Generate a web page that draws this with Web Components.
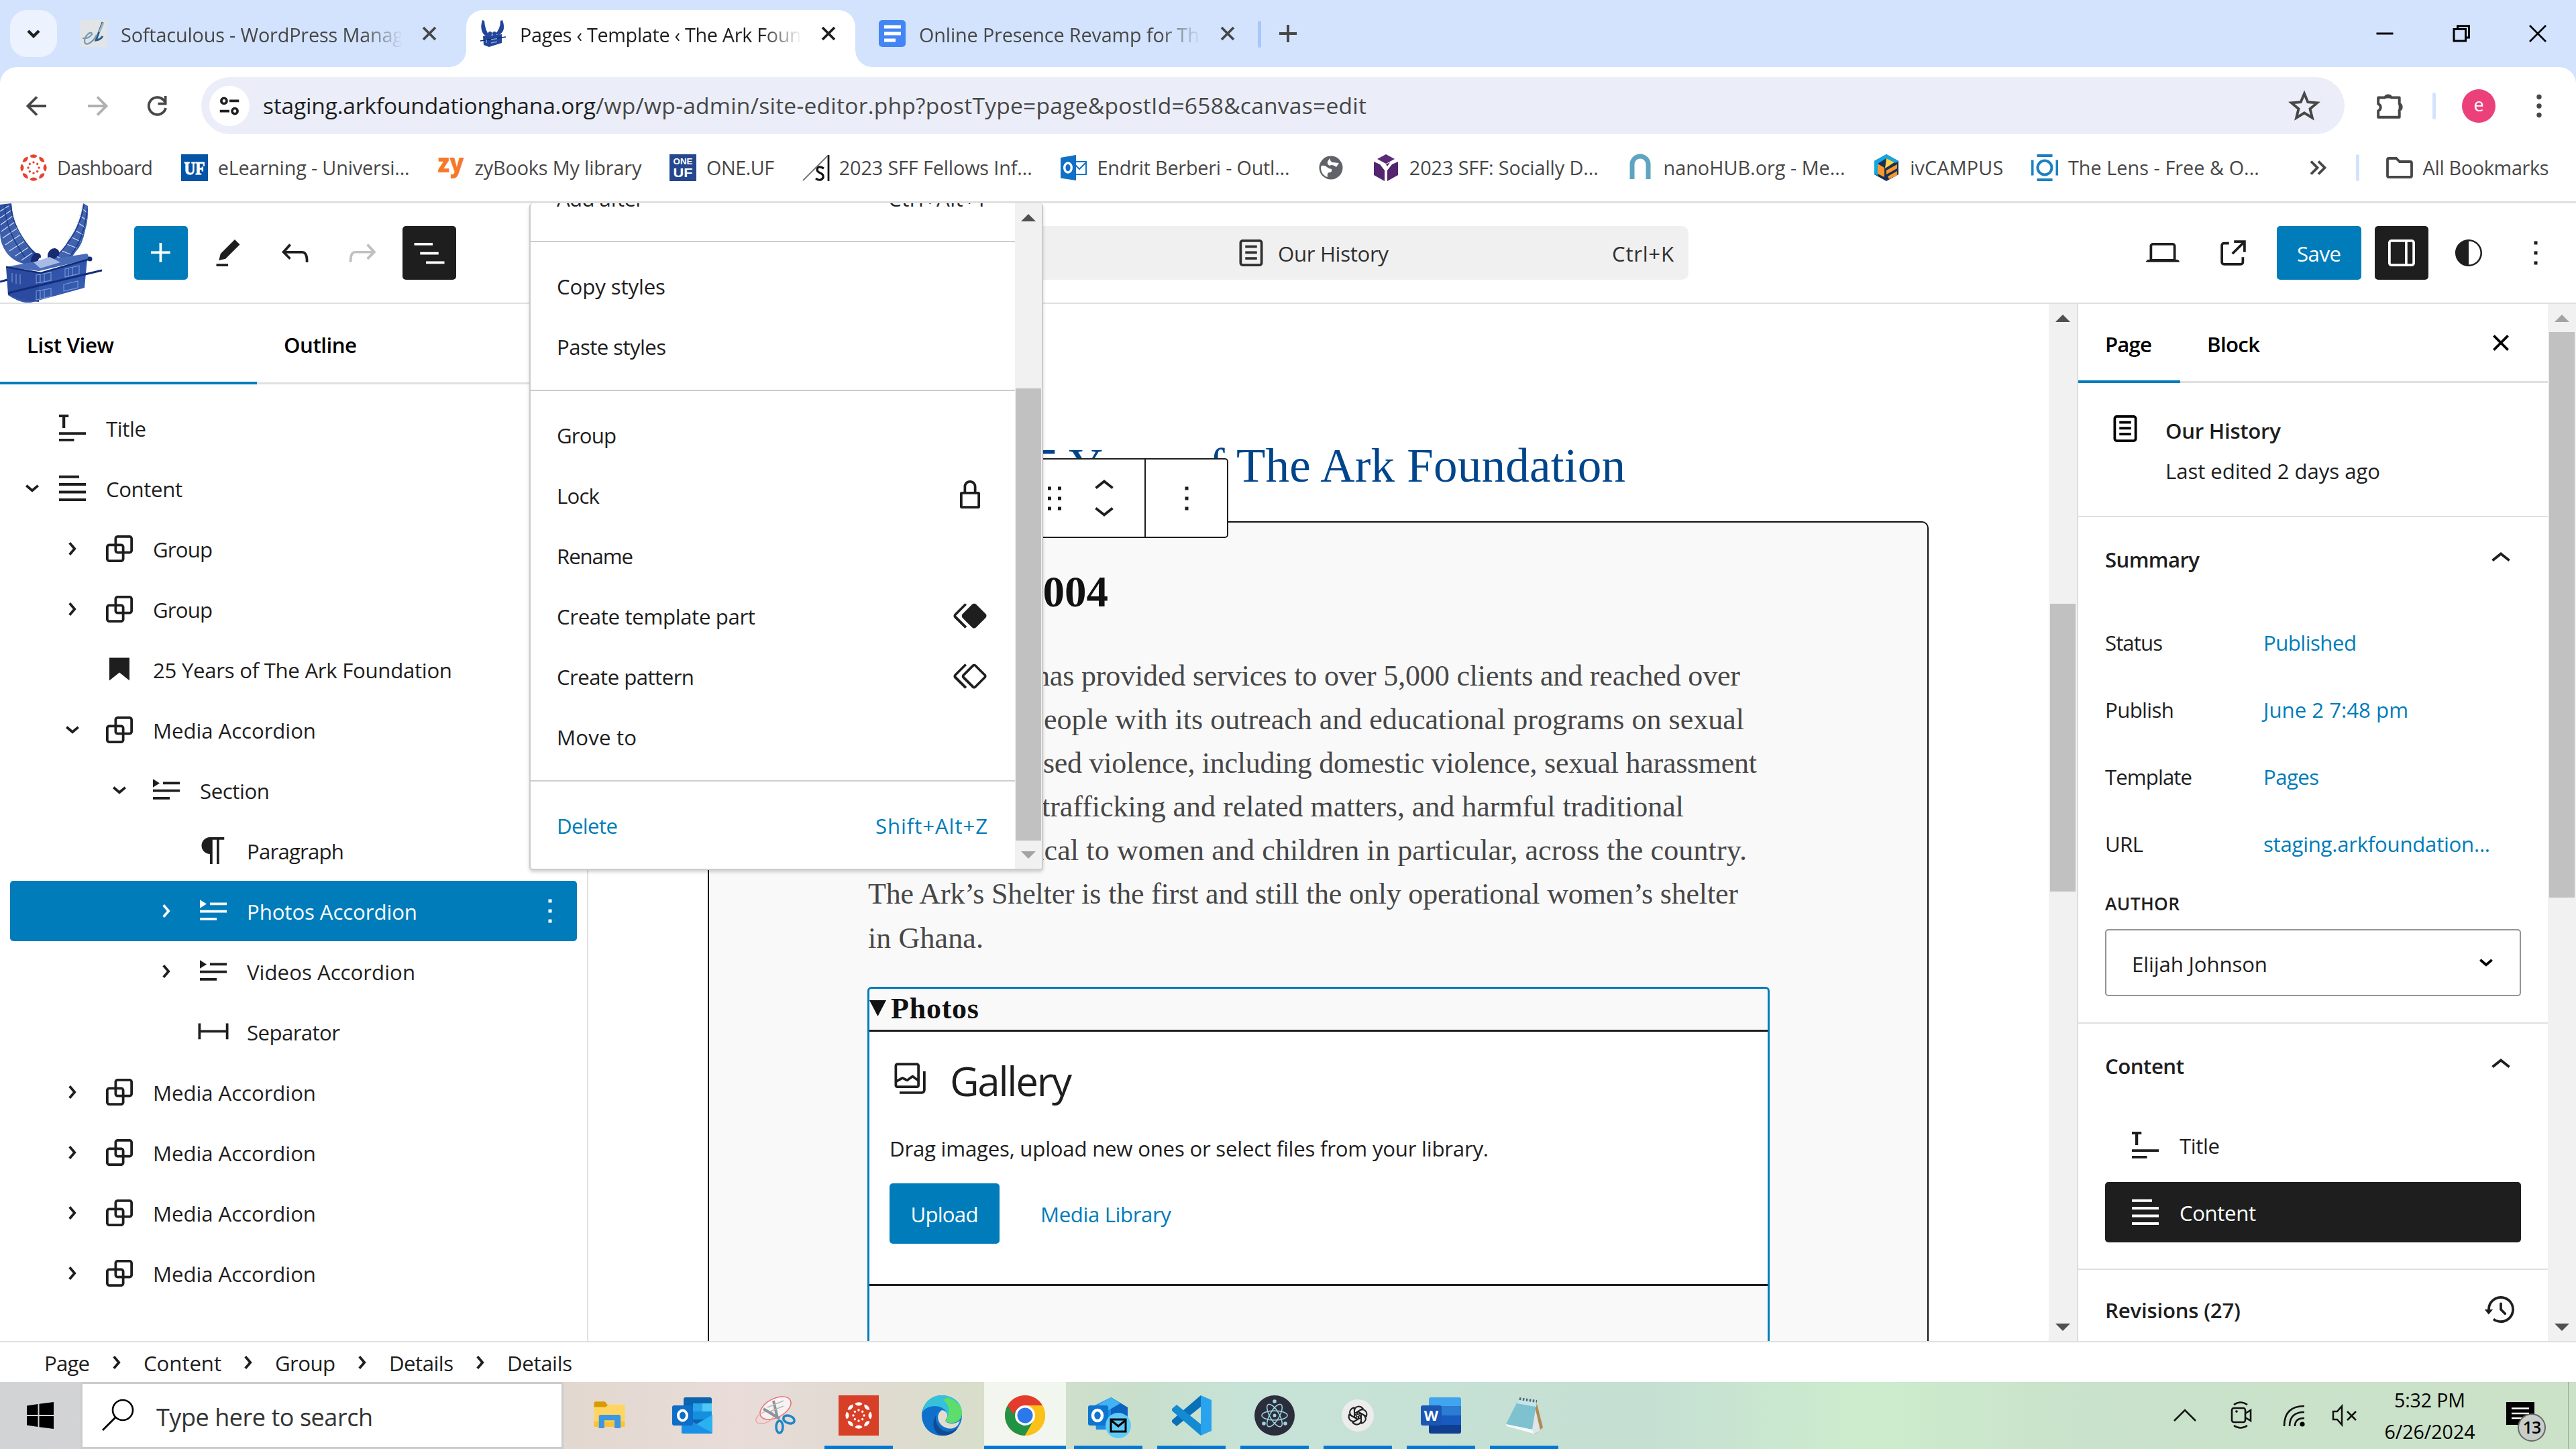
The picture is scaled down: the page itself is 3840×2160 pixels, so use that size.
<!DOCTYPE html>
<html lang="en">
<head>
<meta charset="utf-8">
<title>Pages ‹ Template ‹ The Ark Foundation</title>
<style>
html,body{margin:0;padding:0;width:3840px;height:2160px;overflow:hidden;background:#fff}
body{font-family:"Open Sans","Noto Sans",sans-serif;color:#1e1e1e}
</style>
</head>
<body>
<ark-desktop></ark-desktop>
<script>
/* ---------- icon library ---------- */
const P = d => `<path fill-rule="evenodd" d="${d}"/>`;
const canvasLogo = (bg, fg) => {
  let s = bg;
  for (let i = 0; i < 8; i++) s += `<g transform="rotate(${i*45} 20 20)"><path d="M14.5 2.2a6 5.4 0 0 0 11 0Q20-1.5 14.5 2.2z" fill="${fg}"/><circle cx="20" cy="12" r="1.7" fill="${fg}"/></g>`;
  return s;
};
const ICONS = {
  plus: P('M11 12.5V17.5H12.5V12.5H17.5V11H12.5V6H11V11H6V12.5H11Z'),
  edit: P('m19 7-3-3-8.5 8.5-1 4 4-1L19 7Zm-7 11.5H5V20h7v-1.5Z'),
  undo: P('M18.3 11.7c-.6-.6-1.4-.9-2.3-.9H6.7l2.9-3.3-1.1-1-4.5 5L8.5 16l1-1-2.7-2.7H16c.5 0 .9.2 1.3.5 1 1 1 3.4 1 4.5v.3h1.5v-.2c0-1.5 0-4.3-1.5-5.7z'),
  redo: P('M15.6 6.5l-1.1 1 2.9 3.3H8c-.9 0-1.7.3-2.3.9-1.4 1.5-1.4 4.2-1.4 5.6v.2h1.5v-.3c0-1.1 0-3.5 1-4.5.3-.3.7-.5 1.3-.5h9.2L14.5 15l1.1 1.1 4.6-4.6-4.6-5z'),
  listview: P('M3 6h11v1.5H3V6Zm3.5 5.5h11V13h-11v-1.5ZM21 17H10v1.5h11V17Z'),
  page: P('M15.5 7.5h-7V9h7V7.5Zm-7 3.5h7v1.5h-7V11Zm7 3.5h-7V16h7v-1.5Z') + P('M17 4H7a2 2 0 0 0-2 2v12a2 2 0 0 0 2 2h10a2 2 0 0 0 2-2V6a2 2 0 0 0-2-2ZM7 5.5h10a.5.5 0 0 1 .5.5v12a.5.5 0 0 1-.5.5H7a.5.5 0 0 1-.5-.5V6a.5.5 0 0 1 .5-.5Z'),
  desktop: P('M20.5 16h-.7V8c0-1.1-.9-2-2-2H6.2c-1.1 0-2 .9-2 2v8h-.7c-.8 0-1.5.7-1.5 1.5h20c0-.8-.7-1.5-1.5-1.5zM5.7 8c0-.3.2-.5.5-.5h11.6c.3 0 .5.2.5.5v7.6H5.7V8z'),
  external: P('M19.5 4.5h-7V6h4.44l-5.97 5.97 1.06 1.06L18 7.06v4.44h1.5v-7Zm-13 1a2 2 0 0 0-2 2v10a2 2 0 0 0 2 2h10a2 2 0 0 0 2-2v-3H17v3a.5.5 0 0 1-.5.5h-10a.5.5 0 0 1-.5-.5v-10a.5.5 0 0 1 .5-.5h3V5.5h-3Z'),
  drawer: P('M18 4H6c-1.1 0-2 .9-2 2v12c0 1.1.9 2 2 2h12c1.1 0 2-.9 2-2V6c0-1.1-.9-2-2-2zm-4 14.5H6c-.3 0-.5-.2-.5-.5V6c0-.3.2-.5.5-.5h8v13zm4.5-.5c0 .3-.2.5-.5.5h-2.5v-13H18c.3 0 .5.2.5.5v12z'),
  styles: P('M12 4c-4.4 0-8 3.6-8 8v.1c0 4.1 3.2 7.5 7.2 7.9h.8c4.4 0 8-3.6 8-8s-3.6-8-8-8zm0 15V5c3.9 0 7 3.1 7 7s-3.1 7-7 7z'),
  more: P('M13 19h-2v-2h2v2zm0-6h-2v-2h2v2zm0-6h-2V5h2v2z'),
  close: P('M12 13.06l3.712 3.713 1.061-1.06L13.061 12l3.712-3.712-1.06-1.06L12 10.938 8.288 7.227l-1.061 1.06L10.939 12l-3.712 3.712 1.06 1.061L12 13.061z'),
  up: P('M6.5 12.4L12 8l5.5 4.4-.9 1.2L12 10l-4.5 3.6-1-1.2z'),
  down: P('M17.5 11.6L12 16l-5.5-4.4.9-1.2L12 14l4.5-3.6 1 1.2z'),
  rsmall: P('M10.8622 8.04053L14.2805 12.0286L10.8622 16.0167L9.72327 15.0405L12.3049 12.0286L9.72327 9.01672L10.8622 8.04053Z'),
  dsmall: P('m15.99 10.889-3.988 3.418-3.988-3.418.976-1.14 3.012 2.582 3.012-2.581.976 1.139Z'),
  title: P('M4 4h5.7v1.6H7.7V12H6V5.6H4zM4 14.5h16V16H4zM4 18.4h9v1.5H4z'),
  content: P('M4 4.3h12v1.6H4zM4 8.8h16v1.6H4zM4 13.4h16v1.6H4zM4 18h16v1.6H4z'),
  group: P('M18 4h-7c-1.1 0-2 .9-2 2v3H6c-1.1 0-2 .9-2 2v7c0 1.1.9 2 2 2h7c1.1 0 2-.9 2-2v-3h3c1.1 0 2-.9 2-2V6c0-1.1-.9-2-2-2zm-4.5 14c0 .3-.2.5-.5.5H6c-.3 0-.5-.2-.5-.5v-7c0-.3.2-.5.5-.5h3V13c0 1.1.9 2 2 2h2.5v3zm0-4.5H11c-.3 0-.5-.2-.5-.5v-2.5H13c.3 0 .5.2.5.5v2.5zm5-.5c0 .3-.2.5-.5.5h-3V11c0-1.1-.9-2-2-2h-2.5V6c0-.3.2-.5.5-.5h7c.3 0 .5.2.5.5v7z'),
  heading: P('M6 5V18.5911L12 13.8473L18 18.5911V5H6Z'),
  details: P('M4 16h10v1.5H4V16Zm0-4.5h16V13H4v-1.5ZM10 7h10v1.5H10V7Z') + P('m4 5.25 4 2.5-4 2.5v-5Z'),
  paragraph: P('m9.99609 14v-.2251l.00391.0001v6.225h1.5v-14.5h2.5v14.5h1.5v-14.5h3v-1.5h-8.50391c-2.76142 0-5 2.23858-5 5 0 2.7614 2.23858 5 5 5z'),
  separator: P('M4.5 12.5v4H3V7h1.5v3.987h15V7H21v9.5h-1.5v-4h-15Z'),
  lock: P('M17 10h-1.2V7c0-2.1-1.7-3.8-3.8-3.8-2.1 0-3.8 1.7-3.8 3.8v3H7c-.6 0-1 .4-1 1v8c0 .6.4 1 1 1h10c.6 0 1-.4 1-1v-8c0-.6-.4-1-1-1zM9.7 7c0-1.3 1-2.3 2.3-2.3s2.3 1 2.3 2.3v3H9.7V7zm6.8 11.5h-9v-7h9v7z'),
  symbolfill: P('M21.3 10.8l-5.6-5.6c-.7-.7-1.8-.7-2.5 0l-5.6 5.6c-.7.7-.7 1.8 0 2.5l5.6 5.6c.3.3.8.5 1.2.5s.9-.2 1.2-.5l5.6-5.6c.8-.7.8-1.9.1-2.5zm-17.6 1L10 5.5l-1-1-6.3 6.3c-.7.7-.7 1.8 0 2.5L9 19.5l1.1-1.1-6.3-6.3c-.2 0-.2-.2-.1-.3z'),
  symbol: P('M21.3 10.8l-5.6-5.6c-.7-.7-1.8-.7-2.5 0l-5.6 5.6c-.7.7-.7 1.8 0 2.5l5.6 5.6c.3.3.8.5 1.2.5s.9-.2 1.2-.5l5.6-5.6c.8-.7.8-1.9.1-2.5zm-1 1.4l-5.6 5.6c-.1.1-.3.1-.4 0l-5.6-5.6c-.1-.1-.1-.3 0-.4l5.6-5.6s.1-.1.2-.1.1 0 .2.1l5.6 5.6c.1.1.1.3 0 .4zm-16.6-.4L10 5.5l-1-1-6.3 6.3c-.7.7-.7 1.8 0 2.5L9 19.5l1.1-1.1-6.3-6.3c-.2 0-.2-.2-.1-.3z'),
  drag: P('M8 7h2V5H8v2zm0 6h2v-2H8v2zm0 6h2v-2H8v2zm6-14v2h2V5h-2zm0 8h2v-2h-2v2zm0 6h2v-2h-2v2z'),
  gallery: P('M16.375 4.5H4.625a.125.125 0 0 0-.125.125v8.254l2.859-1.54a.75.75 0 0 1 .68-.016l2.384 1.142 2.89-2.074a.75.75 0 0 1 .874 0l2.313 1.66V4.625a.125.125 0 0 0-.125-.125Zm.125 9.398-2.75-1.975-2.813 2.02a.75.75 0 0 1-.76.067l-2.444-1.17L4.5 14.583v1.792c0 .069.056.125.125.125h11.75a.125.125 0 0 0 .125-.125v-2.477ZM4.625 3C3.728 3 3 3.728 3 4.625v11.75C3 17.273 3.728 18 4.625 18h11.75c.898 0 1.625-.727 1.625-1.625V4.625C18 3.728 17.273 3 16.375 3H4.625ZM20 8v11c0 .69-.31 1-.999 1H6v1.5h13.001c1.52 0 2.499-.982 2.499-2.5V8H20Z'),
  backup: P('M5.5 12h1.75l-2.5 3-2.5-3H4a8 8 0 113.134 6.35l.907-1.194A6.5 6.5 0 105.5 12zm9.53 1.97l-2.28-2.28V8.5a.75.75 0 00-1.5 0V12a.747.747 0 00.218.529l1.282-.84-1.28.842 2.5 2.5a.75.75 0 101.06-1.061z'),
};
/* icons on a 40-unit grid: browser chrome and favicons */
const ICONS40 = {
  tabchev: '<path d="M12 16l8 8 8-8" fill="none" stroke="currentColor" stroke-width="4.4"/>',
  x: '<path d="M11 11l18 18M29 11L11 29" stroke="currentColor" stroke-width="3.8"/>',
  add: '<path d="M20 7v26M7 20h26" stroke="currentColor" stroke-width="4"/>',
  min: '<path d="M7.500 20h25" stroke="currentColor" stroke-width="3"/>',
  restore: '<path d="M9 13.500h17.500V31H9zM14.500 13V8.700h17V26H27" fill="none" stroke="currentColor" stroke-width="3"/>',
  winx: '<path d="M8 8l24 24M32 8L8 32" stroke="currentColor" stroke-width="2.6"/>',
  back: '<path d="M34 20H7M20 6.500L6.500 20 20 33.500" fill="none" stroke="currentColor" stroke-width="3.8"/>',
  fwd: '<path d="M6 20h27M20 6.500L33.500 20 20 33.500" fill="none" stroke="currentColor" stroke-width="3.8"/>',
  reload: '<path d="M32 23a12.800 12.800 0 1 1-3.500-12.200l3 3.400" fill="none" stroke="currentColor" stroke-width="3.8"/><path d="M33.500 5v13.500H20.500v-3.700h9.300V5z" fill="currentColor"/>',
  tune: '<g fill="none" stroke="currentColor" stroke-width="3.8"><circle cx="11.500" cy="12" r="4.300"/><path d="M20 12h15M5 28h15"/><circle cx="28.500" cy="28" r="4.300"/></g>',
  star: '<path d="M20 4l4.600 11 12 1-9.200 7.700 2.900 11.600L20 29l-10.300 6.300 2.900-11.600L3.400 16l12-1z" fill="none" stroke="currentColor" stroke-width="3.4"/>',
  ext: '<path d="M4 10h9.500a5 5 0 0 1 9 0H34v9a5 5 0 0 1 0 9v10H4V29a5.400 5.400 0 0 0 0-10z" transform="translate(0 -2)" fill="none" stroke="currentColor" stroke-width="3.800" stroke-linejoin="round"/><path d="M13 9a5 5 0 0 1 10 0zM33 17a5 5 0 0 1 0 10z" fill="currentColor"/>',
  dots: '<g fill="currentColor"><circle cx="20" cy="6.500" r="3.700"/><circle cx="20" cy="20" r="3.700"/><circle cx="20" cy="33.500" r="3.700"/></g>',
  raquo: '<path d="M9 10.500l9.500 9.500L9 29.500M20 10.500l9.500 9.500L20 29.500" fill="none" stroke="currentColor" stroke-width="3.8"/>',
  folder: '<path d="M2 8a2 2 0 0 1 2-2h11l5 5h16a2 2 0 0 1 2 2v19a2 2 0 0 1-2 2H4a2 2 0 0 1-2-2z" fill="none" stroke="currentColor" stroke-width="3.800"/>',
  soft: '<rect width="40" height="40" fill="#e3e4e6"/><path d="M33 3L23 30q7-1 10-6" fill="none" stroke="#2c5d85" stroke-width="3"/><path d="M3 27q10 1 14-6 0-4-5-1-6 5-6 12 1 5 6 3 8-4 12-13" fill="none" stroke="#7397b3" stroke-width="2.200"/><path d="M28 18L34 4" stroke="#9ab6cc" stroke-width="3"/>',
  ark: '<g fill="#22459a"><path d="M4 0Q-1 16 9 24l6-1Q8 16 7 1zM34 0Q40 16 29 22l-6-1q8-8 8-20z"/><circle cx="15.500" cy="20" r="3"/><circle cx="22" cy="20" r="3"/><path d="M5 24l28-3v13L14 40 6 37z"/></g><path d="M1 31l38-6" stroke="#102a6b" stroke-width="1.500"/><path d="M10 29v5M17 29l9-1.500M17 34l9-1.800" stroke="#8aa2dc" stroke-width="1.500"/>',
  docs: '<rect width="40" height="40" rx="5" fill="#4285f4"/><path d="M8 10h25M8 20h25M8 30h17" stroke="#fff" stroke-width="5"/>',
  canvas: canvasLogo('', '#e4432f'),
  uf: '<rect width="40" height="40" fill="#0553a5"/><text x="20" y="30" text-anchor="middle" font-family="Liberation Serif" font-weight="700" font-size="27" textLength="31" lengthAdjust="spacingAndGlyphs" fill="#fff" stroke="#fff" stroke-width="1">UF</text>',
  zy: '<text x="20" y="27" text-anchor="middle" font-family="Open Sans" font-weight="800" font-size="38" textLength="39" lengthAdjust="spacingAndGlyphs" fill="#f6792a">zy</text>',
  oneuf: '<rect width="40" height="40" fill="#26478d"/><text x="20" y="14.500" text-anchor="middle" font-family="Liberation Sans" font-weight="700" font-size="12.500" textLength="29" lengthAdjust="spacingAndGlyphs" fill="#fff">ONE</text><text x="20" y="34" text-anchor="middle" font-family="Liberation Sans" font-weight="700" font-size="18.500" textLength="29" lengthAdjust="spacingAndGlyphs" fill="#fff">UF</text>',
  sff: '<path d="M39 1v39" stroke="#111" stroke-width="2.800"/><path d="M38 2L1 39" stroke="#777" stroke-width="2"/><path d="M32 21q-9-5-10 2 0 3 5 5t4 7q-4 6-11 1" fill="none" stroke="#111" stroke-width="3.200"/>',
  outlook: '<path d="M20 11h19v19H20z" fill="#fff" stroke="#0f74c8" stroke-width="2"/><path d="M21 14l8 8 9-9" fill="none" stroke="#0f74c8" stroke-width="2"/><path d="M1 5L24 1v38L1 35.500z" fill="#0f70c5"/><ellipse cx="12" cy="20" rx="5.300" ry="7" fill="none" stroke="#fff" stroke-width="3.400"/>',
  globe: '<circle cx="20" cy="20" r="17.500" fill="#5f6368"/><path d="M6 17q5-1 8 2t7 3q1 5-3 5t-3 7Q5 31 5 19zM18 6q2 7 6 6l8 1-4 6q-6-5-10-2-4-2-3-6z" fill="#fff"/><path d="M20 8q6-2 11 4-5 1-8-1z" fill="#5f6368"/>',
  purple: '<path d="M20 0l13 7-13 7L7 7z" fill="#5b2a79"/><path d="M2 11l9 4 7 9v16L2 31zM38 11l-9 4-7 9v16l16-9z" fill="#54246f"/><path d="M20 15l6-3-4 6z" fill="#54246f"/>',
  nano: '<path d="M8 37V15a12 12 0 0 1 24 0v22" fill="none" stroke="#5da5c1" stroke-width="7"/>',
  iv: '<path d="M20 0l18 10v20L20 40 2 30V10z" fill="#1a2f55"/><path d="M20 0l18 10-4 3-14-7-13 8v18l-5-3V10z" fill="#12a7e4"/><path d="M20 6l12 6-14 9z" fill="#ffd24a"/><path d="M7 14l10 6v14l-10-5zM20 24l16-9v6l-16 9zM22 33l14-8v6l-12 6z" fill="#f9992b"/>',
  lens: '<g fill="#1b7fc2"><rect x="8.500" y="0" width="23" height="4"/><rect x="8.500" y="36" width="23" height="4"/><rect x="0" y="8.500" width="3.500" height="23"/><rect x="36.500" y="8.500" width="3.500" height="23"/></g><circle cx="20" cy="20" r="10.500" fill="none" stroke="#1b7fc2" stroke-width="4"/>',
};
/* 60-unit grid: taskbar */
const ICONS60 = {
  start: '<g fill="#000"><path d="M10 15.500L26.500 13v16H10zM28.500 12.700L50 10v19H28.500zM10 31h16.500v16L10 44.500zM28.500 31H50v19l-21.500-2.800z"/></g>',
  search: '<circle cx="35" cy="22" r="15" fill="none" stroke="#000" stroke-width="2.600"/><path d="M24.500 32.500L5 52" stroke="#000" stroke-width="2.800"/>',
  explorer: '<path d="M5 10a3 3 0 0 1 3-3h15l5 6-4 4H5z" fill="#d99a00"/><path d="M5 16h20l4-4h24a3 3 0 0 1 3 3v33H5z" fill="#ffd561"/><path d="M5 40h51v9H5z" fill="#fbc234"/><path d="M13 51V32a3 3 0 0 1 3-3h30a3 3 0 0 1 3 3v19H39V38H22v13z" fill="#3b97e3"/>',
  outlook: '<path d="M17 6a3 3 0 0 1 3-3h36a3 3 0 0 1 3 3v50H17z" fill="#0a64ae"/><path d="M17 12h21v12H17z" fill="#0364b8"/><path d="M38 12h21v12H38z" fill="#50c8f5"/><path d="M31 12h14v12H31z" fill="#2aa4ea"/><path d="M17 24h42v12H17z" fill="#1490df"/><path d="M14 56V30l46 26q0 1-3 1H17q-3 0-3-1z" fill="#1a8fe6"/><path d="M60 29v27L36 43z" fill="#2bb1f2"/><rect x="0" y="15" width="31" height="30" rx="3" fill="#0f6cc7"/><ellipse cx="15.500" cy="30" rx="6.500" ry="7.500" fill="none" stroke="#fff" stroke-width="4"/>',
  snip: '<ellipse cx="30" cy="19" rx="25" ry="14" transform="rotate(-28 30 19)" fill="#f7f3f3" stroke="#e8727a" stroke-width="1.600"/><ellipse cx="14" cy="33" rx="14" ry="8" transform="rotate(-25 14 33)" fill="none" stroke="#ef9ba0" stroke-width="1.200"/><path d="M27 8l6 26M12 20l24 15" stroke="#8c959b" stroke-width="4"/><path d="M18 18L42 8M22 24l20-8" stroke="#b9b9b9" stroke-width="1.500"/><ellipse cx="36" cy="47" rx="5" ry="9" fill="none" stroke="#1e86c8" stroke-width="3.500"/><ellipse cx="50" cy="36" rx="8.500" ry="5.500" transform="rotate(20 50 36)" fill="none" stroke="#1e86c8" stroke-width="3.500"/>',
  canvas: '<rect width="60" height="60" fill="#d83f27"/><g transform="translate(10 10)">' + canvasLogo('', '#fff') + '</g>',
  edge: '<circle cx="30" cy="30" r="30" fill="#1378cf"/><path d="M1 25C4 8 16 0 30 0c18 0 30 12 30 26 0 9-7 15-15 15-6 0-10-2-9-4 2-3 3-5 2-9-2-8-10-12-18-12C11 16 4 20 1 25z" fill="#35c1d9"/><path d="M38 3c13 4 22 12 22 23 0 9-7 15-15 15-6 0-10-2-9-4 7-12 6-22-4-30z" fill="#5ddd6b"/><path d="M1 25c7-10 22-11 30-3-9 0-12 8-9 15 4 11 16 16 32 11-5 8-14 12-24 12C12 60-1 46 1 25z" fill="#0f6fcb"/><path d="M22 29c-3 6 0 18 9 23 7 4 16 2 23-4-4 8-13 12-22 12C20 59 12 44 22 29z" fill="#114a92"/><path d="M30 22c6 1 9 5 8 10-2 5-5 6 1 9 6 2 12 1 18-3-4 12-14 14-24 9-10-6-12-19-3-25z" fill="#e2ddd0"/>',
  chrome: '<circle cx="30" cy="30" r="30" fill="#fbc116"/><path d="M4 15A30 30 0 0 0 30 60L43 37.500 30 30z" fill="#229244"/><path d="M4 15l13 22 13-22z" fill="#229244"/><path d="M30 15h26A30 30 0 0 1 30 60L43 37z" fill="#fbc116"/><path d="M4 15A30 30 0 0 1 56 15H30L17 22 12 28z" fill="#e33b2e"/><circle cx="30" cy="30" r="15" fill="#fff"/><circle cx="30" cy="30" r="11.500" fill="#2b78ea"/>',
  outlooknew: '<path d="M8 16L34 3l25 15v33H12z" fill="#1c8be0"/><path d="M34 3l25 15v12L34 42z" fill="#0b63bd"/><path d="M12 16L34 3l14 9-24 14z" fill="#41b3f2"/><rect x="0" y="15" width="30" height="30" rx="3" fill="#0f74cf"/><ellipse cx="14" cy="30" rx="7" ry="8" fill="none" stroke="#fff" stroke-width="4.500"/><circle cx="45" cy="45" r="19" fill="#5fcaf8"/><rect x="34" y="36" width="22" height="18" fill="#5fcaf8" stroke="#000" stroke-width="3"/><path d="M34 37l11 9 11-9" fill="none" stroke="#000" stroke-width="3"/>',
  vscode: '<path d="M44 0L60 7v46L44 60z" fill="#2aa3ee"/><path d="M44 0v17L8 46l-7-6v-3z" fill="#0a70b8"/><path d="M44 60V43L8 14l-7 6v3z" fill="#128bd3"/>',
  electron: '<circle cx="30" cy="30" r="30" fill="#2b2e3a"/><g fill="none" stroke="#9fd3df" stroke-width="1.500"><ellipse cx="30" cy="30" rx="19" ry="7"/><ellipse cx="30" cy="30" rx="19" ry="7" transform="rotate(60 30 30)"/><ellipse cx="30" cy="30" rx="19" ry="7" transform="rotate(120 30 30)"/></g><g fill="#9fd3df"><circle cx="30" cy="30" r="2.500"/><circle cx="14" cy="42" r="2.800"/><circle cx="46" cy="42" r="2.800"/><circle cx="30" cy="9" r="2.800"/></g>',
  openai: '<circle cx="30" cy="30" r="24" fill="#ececec"/><g fill="none" stroke="#222" stroke-width="2">' + [0,60,120,180,240,300].map(a => `<path transform="rotate(${a} 30 30)" d="M25 33V22.500q1-5.500 6-6 4 0 6.500 3L29 25v4"/>`).join('') + '</g>',
  word: '<path d="M12 6a3 3 0 0 1 3-3h42a3 3 0 0 1 3 3v10H12z" fill="#41a5ee"/><path d="M12 16h48v14H12z" fill="#2b7cd3"/><path d="M12 30h48v14H12z" fill="#185abd"/><path d="M12 44h48v10a3 3 0 0 1-3 3H15a3 3 0 0 1-3-3z" fill="#103f91"/><rect x="0" y="15" width="31" height="30" rx="3" fill="#1b56b5"/><text x="15.500" y="38" text-anchor="middle" font-family="Open Sans" font-weight="700" font-size="22" fill="#fff">W</text>',
  notepad: '<path d="M48 8l10 40-12 10-4-8z" fill="#b08a4f"/><path d="M44 8l10 44-9 6-12-10z" fill="#dfe5e8"/><path d="M22 5l27 4-7 42L3 43z" fill="#7fc2cf"/><path d="M22 5l27 4-1 8-29-5z" fill="#c5e4ea"/><path d="M3 43l39 8 2 6L4 46z" fill="#f6f8f9"/><path d="M23 5l26 4" stroke="#56676c" stroke-width="4" stroke-dasharray="2.500 2.500"/>',
  trayup: '<path d="M14 38l16-16 16 16" fill="none" stroke="#111" stroke-width="2.500"/>',
  meet: '<g fill="none" stroke="#111" stroke-width="2.600"><rect x="17" y="19" width="20" height="21" rx="3"/><path d="M37 27l8-5v16l-8-5"/><path d="M20 14q10-7 20 0M20 45q10 7 20 0"/></g><circle cx="24" cy="24" r="1.800"/>',
  wifi: '<g fill="none" stroke="#111" stroke-width="2.600"><path d="M15 46Q15 16 45 16" /><path d="M23 46Q23 25 45 25"/><path d="M31 46Q31 34 45 34"/></g><circle cx="42" cy="43" r="3.600"/>',
  mute: '<path d="M12 24h6l7-8v28l-7-8h-6z" fill="none" stroke="#111" stroke-width="2.500"/><path d="M33 24l13 13M46 24L33 37" stroke="#111" stroke-width="2.500"/>',
};
const LOGO = `<svg width="152" height="148" viewBox="0 0 152 148">
<defs><linearGradient id="w" x1="0" y1="0" x2="1" y2="1"><stop offset="0" stop-color="#2a4d9f"/><stop offset=".5" stop-color="#4668b2"/><stop offset="1" stop-color="#2a4fa2"/></linearGradient><linearGradient id="b" x1="0" y1="0" x2="1" y2="1"><stop offset="0" stop-color="#24489c"/><stop offset="1" stop-color="#3b62b8"/></linearGradient></defs>
<path d="M0 2L17 0Q19 24 26 40 36 60 56 76L52 92Q24 92 10 74 0 60 0 44z" fill="url(#w)"/>
<path d="M124 0l7 4q1 20-4 36-4 22-14 32-8 14-27 20l-8-9q16-12 24-28 17-22 22-55z" fill="url(#w)"/>
<g fill="none" stroke="#d5dff4" stroke-width="1.200"><path d="M0 12l13-8M0 22l16-11M1 32l18-13M2 42l20-14M4 52l22-15M8 62l22-15M14 71l22-14M22 79l20-13M32 85l16-11M130 14l-9-7M129 25l-11-7M127 36l-13-8M124 47l-15-8M120 57l-17-8M115 67l-18-7M107 77l-17-7M97 85l-13-6"/></g>
<g fill="none" stroke="#1a3a8a" stroke-width="1.500"><path d="M16 1q2 38 38 76M7 2q1 38 30 78M125 2q-6 44-44 80M130 8q-4 46-28 74"/></g>
<path d="M46 84q2-9 9-10 7 1 6 7-4 0-5 8l-10 4zM71 76q3-9 11-9 8 2 6 11-6 2-7 9l-10 2z" fill="#172a72"/>
<path d="M9 95L46 88l84-13 4 8-76 18z" fill="#4a6db9"/><path d="M50 88l24-8 16 8-30 9z" fill="#a7bbe4"/>
<path d="M9 95l52 8 69-20-4 43-80 22q-14 2-34-11z" fill="url(#b)"/>
<path d="M12 97l46 8v42q-30-2-46-12z" fill="#2a4b9f"/>
<g fill="none" stroke="#7f99d3" stroke-width="1.100"><path d="M54 107l22-4v12l-22 4zM97 98l21-5v12l-21 5zM54 131l22-4v12l-22 5zM95 121l21-5v10l-21 5zM60 106v12M66 105v12M102 97v12M108 96v12M60 130v12M66 129v12M18 104v14M24 105v15M30 106v15"/></g>
<path d="M9 95l52 9 70-20" fill="none" stroke="#122b78" stroke-width="2.500"/>
<path d="M0 117l11-3M12 134Q60 122 152 100" fill="none" stroke="#142c7c" stroke-width="3"/><circle cx="134" cy="83" r="3.500" fill="#142c7c"/></svg>`;

/* ---------- base ---------- */
const define = (name, css, html) => customElements.define(name, class extends HTMLElement {
  connectedCallback() {
    if (this.shadowRoot) return;
    const r = this.attachShadow({ mode: 'open' });
    r.innerHTML = `<style>:host{display:block;box-sizing:border-box}*{box-sizing:border-box}${css}</style>` + (typeof html === 'function' ? html(this) : html);
  }
});
const A = (el, n, d = '') => el.getAttribute(n) ?? d;

/* <fit-text w> spaces its glyphs so that the run spans exactly w pixels */
const fits = [];
customElements.define('fit-text', class extends HTMLElement {
  connectedCallback() {
    if (this.shadowRoot) return;
    const r = this.attachShadow({ mode: 'open' });
    r.innerHTML = `<style>:host{display:block;flex:none;white-space:pre;line-height:1.3;padding-top:3px;font-size:31.2px;box-sizing:border-box}</style><span><slot></slot></span>`;
    fits.push(this);
  }
  fit() {
    const w = +this.getAttribute('w'), s = this.shadowRoot.querySelector('span');
    this.style.width = w + 'px';
    const n = this.textContent.length;
    s.style.letterSpacing = ((w - s.getBoundingClientRect().width) / Math.max(1, n - 1)).toFixed(3) + 'px';
  }
});
define('ui-icon', ':host{flex:none;line-height:0}svg{display:block;fill:currentColor;overflow:visible}', el => {
  const n = A(el, 'n'), s = A(el, 's', '60'), g = A(el, 'g', '24');
  const lib = g === '24' ? ICONS : g === '40' ? ICONS40 : ICONS60;
  return `<svg width="${s}" height="${s}" viewBox="0 0 ${g} ${g}">${lib[n]}</svg>`;
});
const I = (n, s = 60, g = 24, x = '') => `<ui-icon n="${n}" s="${s}" g="${g}" ${x}></ui-icon>`;
const T = (w, t, x = '') => `<fit-text w="${w}" ${x}>${t}</fit-text>`;

/* ---------- browser ---------- */
define('browser-tab', `
:host{display:flex;align-items:center;height:70px;color:#474747;flex:none}
.in{display:flex;align-items:center;width:100%;height:100%;padding-left:20px}
fit-text{font-size:28.800px;margin-left:20px}
.clip{width:440px;overflow:hidden;-webkit-mask:linear-gradient(90deg,#000 380px,transparent 440px);mask:linear-gradient(90deg,#000 380px,transparent 440px)}
:host([active]){background:#fff;height:85px;border-radius:25px 25px 0 0;color:#1f1f1f;align-items:flex-start}
:host([active]) .in{height:70px}
ui-icon[n=x]{margin-left:20px}`,
el => `<div class="in">${I(A(el,'icon'),40,40)}<div class="clip">${T(A(el,'w'),A(el,'label'))}</div>${I('x',40,40)}</div>`);

define('browser-tabstrip', `
:host{height:100px;background:#d3e3fd;display:flex;align-items:flex-start;padding:15px 0 0 15px}
.menu{width:70px;height:70px;border-radius:25px;background:#ecf2fe;display:flex;align-items:center;justify-content:center;margin-right:15px;color:#1f1f1f}
.flare{width:25px;height:25px;align-self:flex-end;flex:none}
.l{background:radial-gradient(circle at 0 0,#d3e3fd 24.500px,#fff 25px)}
.r{background:radial-gradient(circle at 100% 0,#d3e3fd 24.500px,#fff 25px)}
.sep{width:5px;height:40px;border-radius:3px;background:#a8c7fa;margin:16px 20px 0 25px}
.new{height:70px;display:flex;align-items:center;color:#474747}
.win{margin-left:auto;display:flex;height:70px;align-items:center;gap:74px;padding-right:37px;color:#000}`,
`<div class="menu">${I('tabchev',40,40)}</div>
<browser-tab icon="soft" w="437" label="Softaculous - WordPress Manage" style="width:570px"></browser-tab>
<div class="flare l"></div><browser-tab active icon="ark" w="437" label="Pages ‹ Template ‹ The Ark Found" style="width:580px"></browser-tab><div class="flare r"></div>
<browser-tab icon="docs" w="434" label="Online Presence Revamp for The" style="width:560px;margin-left:-10px"></browser-tab>
<div class="sep"></div><div class="new">${I('add',40,40)}</div>
<div class="win">${I('min',40,40)}${I('restore',40,40)}${I('winx',40,40)}</div>`);

define('browser-toolbar', `
:host{height:100px;background:#d3e3fd}
.bar{height:100px;background:#fff;border-radius:25px 25px 0 0;display:flex;align-items:center;padding:15px 35px 0 35px;color:#474747}
.nav{display:flex;gap:50px}.nav ui-icon:nth-child(2){color:#b0b0b0}
.omni{margin-left:45px;width:3195px;height:85px;border-radius:43px;background:#ebeef8;display:flex;align-items:center;padding:0 37px 0 12px;flex:none}
.site{width:60px;height:60px;border-radius:50%;background:#fff;display:flex;align-items:center;justify-content:center;color:#1f1f1f;margin-right:20px}
fit-text{font-size:33.600px;padding-top:1px}
.omni>ui-icon{margin-left:auto}
.sep{width:5px;height:40px;border-radius:3px;background:#d3e3fd;margin:0 39px 0 43px}
.av{width:50px;height:50px;border-radius:50%;background:#ec407a;color:#fff;text-align:center;font-size:27px;line-height:46px;margin-right:45px}`,
`<div class="bar"><div class="nav">${I('back',40,40)}${I('fwd',40,40)}${I('reload',40,40)}</div>
<div class="omni"><div class="site">${I('tune',38,40)}</div>${T(496,'staging.arkfoundationghana.org','style="color:#1f1f1f"')}${T(1149,'/wp/wp-admin/site-editor.php?postType=page&amp;postId=658&amp;canvas=edit')}${I('star',46,40)}</div>
${I('ext',42,40,'style="margin-left:46px"')}<div class="sep"></div><div class="av">e</div>${I('dots',40,40)}</div>`);

define('bookmark-item', ':host{display:flex;align-items:center;gap:15px;flex:none}fit-text{font-size:28.800px;padding:0}',
el => I(A(el,'icon'),40,40) + (A(el,'w') ? T(A(el,'w'),A(el,'label')) : ''));
const B = (i,w,l) => `<bookmark-item icon="${i}" w="${w}" label="${l}"></bookmark-item>`;
define('browser-bookmarks', `
:host{height:103px;background:#fff;border-bottom:3px solid #e0e0e0;display:flex;align-items:center;padding-left:30px;gap:41.700px;color:#474747}
.tail{display:flex;align-items:center;margin-left:26px}.sep{width:5px;height:40px;border-radius:3px;background:#d3e3fd;margin:0 40px 0 36px}`,
B('canvas',143,'Dashboard')+B('uf',286,'eLearning - Universi...')+B('zy',249,'zyBooks My library')+B('oneuf',101,'ONE.UF')+B('sff',288,'2023 SFF Fellows Inf...')+B('outlook',287,'Endrit Berberi - Outl...')+B('globe','','')+B('purple',282,'2023 SFF: Socially D...')+B('nano',271,'nanoHUB.org - Me...')+B('iv',139,'ivCAMPUS')+B('lens',285,'The Lens - Free &amp; O...')
+`<div class="tail">${I('raquo',40,40)}<div class="sep"></div>${B('folder',188,'All Bookmarks')}</div>`);

/* ---------- editor ---------- */
define('editor-header', `
:host{height:150px;border-bottom:2.500px solid #e0e0e0;display:flex;align-items:center;background:#fff;flex:none}
.logo{width:200px;height:148px;flex:none}
.btn{width:80px;height:80px;border-radius:5px;display:flex;align-items:center;justify-content:center;flex:none}
.tools{display:flex;gap:20px}.blue{background:#007cba;color:#fff}.dark{background:#1e1e1e;color:#fff}
.cmd{margin-left:737px;width:1100px;height:80px;border-radius:10px;background:#f0f0f0;display:flex;align-items:center;padding:0 22px 0 418px;color:#2f2f2f}
.cmd fit-text:last-child{margin-left:auto}
.right{margin-left:auto;display:flex;gap:20px;padding-right:20px;align-items:center}`,
`<div class="logo">${LOGO}</div>
<div class="tools"><div class="btn blue">${I('plus')}</div><div class="btn">${I('edit')}</div><div class="btn">${I('undo')}</div><div class="btn" style="color:#c0c0c0">${I('redo')}</div><div class="btn dark">${I('listview')}</div></div>
<div class="cmd">${I('page')}${T(165,'Our History','style="margin-left:10px"')}${T(92,'Ctrl+K')}</div>
<div class="right"><div class="btn">${I('desktop')}</div><div class="btn" style="margin:0 5px">${I('external')}</div><div class="btn blue" style="width:126px">${T(66,'Save')}</div><div class="btn dark">${I('drawer')}</div><div class="btn">${I('styles')}</div><div class="btn">${I('more')}</div></div>`);

define('panel-tabs', `
:host{display:flex;height:120px;border-bottom:3px solid #e0e0e0;color:#000;font-weight:600;flex:none}
:host([closable]){height:118px}
.tab{display:flex;align-items:center;height:inherit;padding:0 41px 0 40px}
.on{box-shadow:inset 0 -4px #007cba}
ui-icon{margin:auto 40px auto auto}`,
el => { const t = A(el,'tabs').split('|').map(s => s.split(':')), h = el.hasAttribute('closable') ? 118 : 120; return t.map(([l,w,p],i) => `<div class="tab ${i?'':'on'}" style="height:${h}px;${p?`width:${p}px`:''}">${T(w,l)}</div>`).join('') + (el.hasAttribute('closable') ? I('close') : ''); });

define('tree-row', `
:host{display:flex;align-items:center;height:90px;flex:none;margin:0 15px;border-radius:5px}
:host([selected]){background:#007cba;color:#fff}
.chev{width:60px;height:60px;flex:none}
fit-text{margin-left:20px}
ui-icon[n=more]{margin-left:auto;margin-right:10px}`,
el => { const l = +A(el,'level'), o = A(el,'open');
 const chevX = [18,78,148,218][l] - 15, gap = l ? 10 : 0;
 return `<div class="chev" style="margin-left:${chevX}px;margin-right:${gap}px">${o==='y'?I('dsmall'):o==='n'?I('rsmall'):''}</div>${I(A(el,'icon'))}${T(A(el,'w'),A(el,'label'))}${el.hasAttribute('selected')?I('more'):''}`; });
const R = (l,o,i,w,t,x='') => `<tree-row level="${l}" open="${o}" icon="${i}" w="${w}" label="${t}" ${x}></tree-row>`;
define('list-view', `
:host{width:877px;border-right:2.500px solid #e0e0e0;background:#fff;flex:none;display:flex;flex-direction:column}
.rows{padding-top:20px;display:flex;flex-direction:column}`,
`<panel-tabs tabs="List View:130:383|Outline:109"></panel-tabs><div class="rows">`
+R(0,'','title',60,'Title')+R(0,'y','content',114,'Content')+R(1,'n','group',89,'Group')+R(1,'n','group',89,'Group')
+R(1,'','heading',446,'25 Years of The Ark Foundation')+R(1,'y','group',243,'Media Accordion')+R(2,'y','details',104,'Section')
+R(3,'','paragraph',145,'Paragraph')+R(3,'n','details',254,'Photos Accordion','selected')+R(3,'n','details',251,'Videos Accordion')+R(3,'','separator',139,'Separator')
+R(1,'n','group',243,'Media Accordion').repeat(4)+`</div>`);

define('scroll-bar', `
:host{width:42px;background:#f1f1f1;display:flex;flex-direction:column;align-items:center;flex:none}
.a{height:42px;display:flex;align-items:center;flex:none}.up{margin-bottom:var(--before)}
.thumb{width:38px;height:var(--size);background:#c1c1c1;flex:none}.dn{margin-top:auto}
svg{display:block}`,
el => `<div class="a up"><svg width="22" height="11"><path d="M0 11L11 0l11 11z" fill="${A(el,'up','#505050')}"/></svg></div><div class="thumb"></div><div class="a dn"><svg width="22" height="11"><path d="M0 0L11 11 22 0z" fill="${A(el,'down','#505050')}"/></svg></div>`);

const L = (x,w,t) => `<div class="line" style="padding-left:${x-1293}px">${T(w,t)}</div>`;
define('page-canvas', `
:host{flex:1;position:relative;overflow:hidden;background:#fff;font-family:"Liberation Serif",serif}
fit-text{padding:0;line-height:inherit;font-size:inherit}
h2{margin:199px 0 0 631px;height:84px;line-height:84px;font-size:71px;font-weight:400;color:#00458c;display:flex}
.group{margin:41px 0 0 178px;width:1820px;height:1400px;border:2.500px solid #111;border-radius:10px;background:#f9f9f9;padding:63px 0 0 236px;color:#111}
h3{margin:0;height:80px;line-height:80px;font-size:65px;display:flex;padding-left:229px}
.p{margin-top:53px;font-size:44px;line-height:65.100px;color:#474747}
.line{height:65.100px}
.det{margin-top:40px;width:1345px;height:900px;border:3.500px solid #007cba;border-radius:6px;display:flex;flex-direction:column}
.sum{height:61px;display:flex;align-items:center;font-size:44px;font-weight:700;line-height:58px}
.sum svg{margin:0 7px 2px 0}
.gal{height:382px;background:#fff;border:solid #1e1e1e;border-width:3px 0;padding:39px 0 0 30px;font-family:"Open Sans",sans-serif;color:#1e1e1e;font-size:31.200px;line-height:40px}
.gh{display:flex;height:60px;align-items:center;font-size:60px;line-height:80px;gap:30px;margin-bottom:55px}
.gh fit-text{padding-top:8px}
.acts{display:flex;align-items:center;margin-top:32px;gap:61px;color:#007cba}
.up{width:164px;height:90px;border-radius:5px;background:#007cba;color:#fff;display:flex;align-items:center;justify-content:center}
.acts fit-text{padding-top:3px}
.bt{position:absolute;left:417px;top:230px;width:537px;height:119px;background:#fff;border:2.500px solid #1e1e1e;border-radius:5px;display:flex;justify-content:flex-end;color:#1e1e1e}
.bt div{display:flex;align-items:center}
.dr{margin-right:4px}
.mv{flex-direction:column;width:80px;justify-content:center;margin-right:20px}
.mv ui-icon{height:35px;margin:0}.mv ui-icon:first-child{margin-top:-25px}
.mr{width:123px;justify-content:center;border-left:2.500px solid #1e1e1e}`,
`<h2>${T(335,'25 Years of ')}${T(580,'The Ark Foundation')}</h2>
<div class="group"><h3>${T(130,'2004')}</h3>
<div class="p">${L(1543,1051,'has provided services to over 5,000 clients and reached over')}${L(1534,1066,'people with its outreach and educational programs on sexual')}${L(1514,1105,'based violence, including domestic violence, sexual harassment')}${L(1553,957,'trafficking and related matters, and harmful traditional')}${L(1463,1141,'inimical to women and children in particular, across the country.')}${L(1294,1297,'The Ark’s Shelter is the first and still the only operational women’s shelter')}${L(1294,172,'in Ghana.')}</div>
<div class="det"><div class="sum"><svg width="25" height="24"><path d="M0 0h25L12.500 24z" fill="#111"/></svg>${T(131,'Photos')}</div>
<div class="gal"><div class="gh">${I('gallery')}${T(182,'Gallery')}</div>${T(893,'Drag images, upload new ones or select files from your library.')}
<div class="acts"><div class="up">${T(101,'Upload')}</div>${T(195,'Media Library')}</div></div></div></div>
<div class="bt"><div class="dr">${I('drag')}</div><div class="mv">${I('up')}${I('down')}</div><div class="mr">${I('more')}</div></div>`);

const SR = (w,l,w2,v) => `<div class="row"><div class="k">${T(w,l)}</div>${T(w2,v,'class="v"')}</div>`;
define('settings-sidebar', `
:host{width:700px;background:#fff;overflow:hidden;flex:none}
.card{height:200px;border-bottom:2.500px solid #e0e0e0;display:flex;padding:38px 0 0 40px}
.card fit-text{margin-left:30px;height:60px;line-height:57px;padding-top:5px}
.hd{font-weight:600;display:flex;align-items:center;justify-content:space-between;padding:0 40px;height:124px}
.row{display:flex;height:100px;align-items:center;padding-left:40px}.k{width:236px}.v{color:#007cba}
.au{font-weight:600;margin:20px 0 21px 40px}.au fit-text{font-size:26.400px}
.sel{margin:0 40px 40px;height:100px;border:2.500px solid #949494;border-radius:5px;display:flex;align-items:center;justify-content:space-between;padding:0 20px 0 38px}
.s1{border-bottom:2.500px solid #e0e0e0;height:755px}
.s2{border-bottom:2.500px solid #e0e0e0;height:367px}
.b{margin:0 40px;height:90px;border-radius:5px;display:flex;align-items:center;gap:21px;padding-left:30px}
.on{background:#1e1e1e;color:#fff}`,
`<panel-tabs tabs="Page:70:152|Block:79" closable></panel-tabs>
<div class="card">${I('page',60,24,'style="color:#000"')}<div>${T(172,'Our History','style="font-weight:600"')}${T(320,'Last edited 2 days ago')}</div></div>
<div class="s1"><div class="hd">${T(141,'Summary')}${I('up')}</div><div style="height:12px"></div>
${SR(86,'Status',139,'Published')}${SR(103,'Publish',216,'June 2 7:48 pm')}${SR(130,'Template',83,'Pages')}${SR(57,'URL',338,'staging.arkfoundation...')}
<div class="au">${T(111,'AUTHOR')}</div><div class="sel">${T(202,'Elijah Johnson')}${I('dsmall',60,24,'style="color:#000"')}</div></div>
<div class="s2"><div class="hd">${T(118,'Content')}${I('up')}</div><div style="height:12px"></div><div class="b">${I('title')}${T(60,'Title')}</div><div class="b on" style="margin-top:10px">${I('content')}${T(114,'Content')}</div></div>
<div class="hd" style="height:118px">${T(202,'Revisions (27)')}${I('backup')}</div>`);

define('menu-row', ':host{display:flex;align-items:center;height:90px;padding:0 41px 0 39px;justify-content:space-between}ui-icon{margin-right:-4px}:host([link]){color:#007cba}',
el => T(A(el,'w'),A(el,'label')) + (A(el,'icon') ? I(A(el,'icon')) : '') + (A(el,'key') ? T(A(el,'kw'),A(el,'key')) : ''));
const M = (w,l,x='') => `<menu-row w="${w}" label="${l}" ${x}></menu-row>`;
define('block-menu', `
:host{position:absolute;left:789px;top:0;width:766px;height:994px;overflow:hidden;background:#fff;border:2.500px solid #ccc;border-top:0;border-radius:5px;display:flex;color:#1e1e1e;box-shadow:0 3px 5px rgba(0,0,0,.18)}
.items{flex:1;margin-top:-53px}
.sec{border-bottom:2.500px solid #ccc;padding:20px 0}
.sec:last-child{border:0}`,
`<div class="items"><div class="sec" style="padding-top:0;padding-bottom:19px">${M(130,'Add after','key="Ctrl+Alt+Y" kw="148"')}</div>
<div class="sec">${M(162,'Copy styles')}${M(163,'Paste styles')}</div>
<div class="sec" style="padding-top:20px">${M(89,'Group')}${M(64,'Lock','icon="lock"')}${M(114,'Rename')}${M(296,'Create template part','icon="symbolfill"')}${M(205,'Create pattern','icon="symbol"')}${M(119,'Move to')}</div>
<div class="sec" style="padding-top:20px">${M(91,'Delete','link key="Shift+Alt+Z" kw="167"')}</div></div>
<scroll-bar down="#a3a3a3" style="width:40px;--before:234px;--size:674px"></scroll-bar>`);

define('block-breadcrumb', `
:host{height:61px;border-top:2.500px solid #e0e0e0;background:#fff;display:flex;align-items:center;padding-left:66px;gap:10px;flex:none}`,
[['Page',68],['Content',116],['Group',90],['Details',96],['Details',97]].map(([t,w]) => T(w,t)).join(I('rsmall')));

define('site-editor', `
:host{height:1757px;position:relative;display:flex;flex-direction:column}
.main{flex:1;display:flex;min-height:0}
.bd{width:2.500px;background:#ddd}`,
`<editor-header></editor-header><div class="main"><list-view></list-view><page-canvas></page-canvas><scroll-bar style="--before:405px;--size:429px"></scroll-bar><div class="bd"></div><settings-sidebar></settings-sidebar><scroll-bar up="#a3a3a3" style="--before:0px;--size:843px"></scroll-bar></div>
<block-breadcrumb></block-breadcrumb><block-menu></block-menu>`);

/* ---------- taskbar ---------- */
define('task-button', `
:host{width:124px;height:100px;display:flex;align-items:center;justify-content:center;flex:none}
.b{width:102px;height:100px;display:flex;align-items:center;justify-content:center}
:host([running]) .b{box-shadow:inset 0 -5px #0078d7}
:host([active]) .b{width:122px;background:rgba(255,255,255,.7)}`,
el => `<div class="b">${I(A(el,'icon'),A(el,'s','60'),60)}</div>`);
const K = (i,x='') => `<task-button icon="${i}" ${x}></task-button>`;
define('win-taskbar', `
:host{height:100px;display:flex;align-items:center;background:linear-gradient(90deg,#d2d3d5 0,#d8d6d4 600px,#e2d8cf 850px,#e9dcd9 1100px,#e0dad0 1300px,#d5dfc9 1500px,#c8dfcc 1700px,#c7e2d6 1850px,#c5dfd3 2450px,#cdeccd 2780px,#c9e2cb 3100px,#cbe1c8 3840px)}
.start{width:120px;display:flex;justify-content:center}
.search{width:720px;height:100px;border:3px solid #ccc;background:#fff;display:flex;align-items:center;padding-left:25px;color:#333}
.search fit-text{font-size:36px;padding-top:6px}
.apps{display:flex;margin-left:6px}
.tray{margin-left:auto;display:flex;align-items:center;color:#000}
.clock{width:160px;display:flex;flex-direction:column;align-items:center;margin:0 12px 0 16px;padding-top:2px}.clock fit-text{font-size:28.500px;line-height:47px;padding:0}
.nt{width:90px;height:100px;position:relative;padding:30px 0 0 22px}
.nt svg{display:block}.badge{position:absolute;left:39px;top:47px;width:42px;height:42px;border-radius:50%;border:2px solid #666;background:#c9cdc9;font-size:25px;line-height:36px;text-align:center;font-weight:600;letter-spacing:-1px}
.peek{width:12px;height:100px;border-left:1px solid #9aa79a;margin-left:24px}`,
`<div class="start">${I('start',60,60)}</div><div class="search">${I('search',60,60)}${T(323,'Type here to search','style="margin-left:25px"')}</div>
<div class="apps">${K('explorer','s="54"')}${K('outlook')}${K('snip')}${K('canvas','running')}${K('edge')}${K('chrome','running active')}${K('outlooknew','running')}${K('vscode','running')}${K('electron','running')}${K('openai','running')}${K('word','running')}${K('notepad','running')}</div>
<div class="tray">${I('trayup',60,60)}${I('meet',60,60,'style="margin-left:23px"')}${I('wifi',60,60,'style="margin-left:20px"')}${I('mute',60,60,'style="margin-left:16px"')}
<div class="clock">${T(106,'5:32 PM')}${T(135,'6/26/2024')}</div>
<div class="nt"><svg width="42" height="34" viewBox="0 0 42 34"><path d="M0 0h42v34H12L0 34z" fill="#000"/><path d="M8 9.500h26M8 17h26M8 24h18" stroke="#fff" stroke-width="2.500"/></svg><div class="badge">13</div></div><div class="peek"></div></div>`);

define('ark-desktop', ':host{width:3840px;height:2160px;display:flex;flex-direction:column;overflow:hidden}:host>*{flex:none}',
'<browser-tabstrip></browser-tabstrip><browser-toolbar></browser-toolbar><browser-bookmarks></browser-bookmarks><site-editor></site-editor><win-taskbar></win-taskbar>');

fits.forEach(f => f.fit());
</script>
</body>
</html>
